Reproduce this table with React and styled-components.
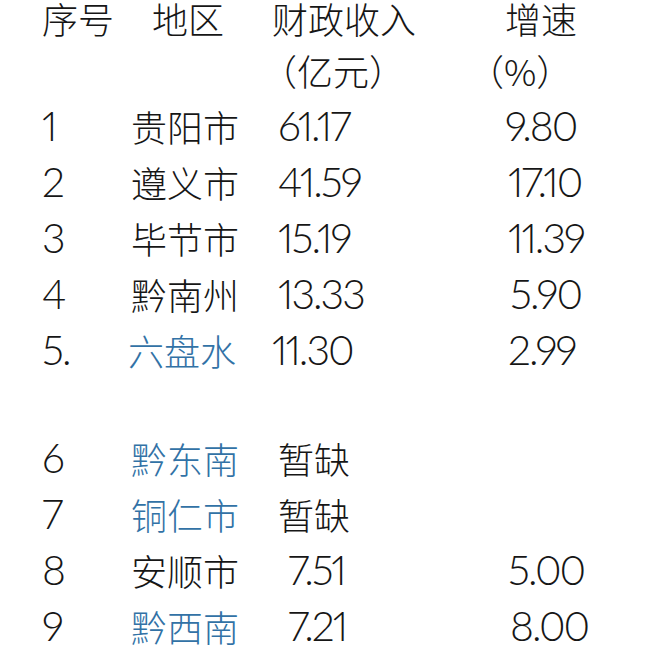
import React from 'react'
import styled, { createGlobalStyle } from 'styled-components'

const GlobalStyle = createGlobalStyle`
  html, body {
    margin: 0;
    padding: 0;
    background: #ffffff;
  }
`

const Table = styled.div`
  width: 652px;
  height: 663px;
  overflow: hidden;
  padding-left: 42px;
  box-sizing: border-box;
  color: #161616;
`

const Row = styled.div`
  display: grid;
  grid-template-columns: 89px 147px 230px 1fr;
  align-items: ${({ $top }) => ($top ? 'start' : 'center')};
  height: ${({ $h }) => $h || 56}px;
`

const Spacer = styled.div`
  height: 52px;
`

const Cell = styled.div`
  margin-left: ${({ $shift }) => $shift || 0}px;
  white-space: nowrap;
  line-height: 36px;
`

const Han = styled.span`
  font-family: "Noto Sans CJK SC", sans-serif;
  font-weight: 300;
  font-size: 36px;
  color: ${({ $blue }) => ($blue ? '#3272a6' : '#161616')};
`

const Num = styled.span`
  font-family: Lato, "Liberation Sans", sans-serif;
  font-weight: 300;
  font-size: 41px;
  letter-spacing: -2px;
  font-variant-numeric: proportional-nums;
`

const rows = [
  { no: '1', area: '贵阳市', rev: '61.17', rate: '9.80', rateShift: -3 },
  { no: '2', area: '遵义市', rev: '41.59', rate: '17.10' },
  { no: '3', area: '毕节市', rev: '15.19', rate: '11.39' },
  { no: '4', area: '黔南州', rev: '13.33', rate: '5.90', rateShift: 2 },
  { no: '5.', area: '六盘水', blue: true, areaShift: -3, rev: '11.30', revShift: -6, rate: '2.99' },
]

const rowsLater = [
  { no: '6', area: '黔东南', blue: true, rev: '暂缺' },
  { no: '7', area: '铜仁市', blue: true, rev: '暂缺' },
  { no: '8', area: '安顺市', rev: '7.51', revShift: 10, rate: '5.00' },
  { no: '9', area: '黔西南', blue: true, rev: '7.21', revShift: 10, rate: '8.00', rateShift: 2 },
]

const Value = ({ text }) =>
  /^[\d.]+$/.test(text) ? <Num>{text}</Num> : <Han>{text}</Han>

const DataRow = ({ r }) => (
  <Row>
    <Cell><Num>{r.no}</Num></Cell>
    <Cell $shift={r.areaShift}><Han $blue={r.blue}>{r.area}</Han></Cell>
    <Cell $shift={r.revShift}><Value text={r.rev} /></Cell>
    <Cell $shift={r.rateShift}>{r.rate && <Num>{r.rate}</Num>}</Cell>
  </Row>
)

const App = () => {
  return (
    <>
      <GlobalStyle />
      <Table>
        <Row $top $h={47}>
          <Cell><Han>序号</Han></Cell>
          <Cell $shift={21}><Han>地区</Han></Cell>
          <Cell $shift={-6}><Han>财政收入</Han></Cell>
          <Cell $shift={-3}><Han>增速</Han></Cell>
        </Row>
        <Row>
          <Cell />
          <Cell />
          <Cell $shift={-17}><Han>（亿元）</Han></Cell>
          <Cell $shift={-40}><Han>（%）</Han></Cell>
        </Row>
        {rows.map(r => <DataRow key={r.no} r={r} />)}
        <Spacer />
        {rowsLater.map(r => <DataRow key={r.no} r={r} />)}
      </Table>
    </>
  )
}

export default App
